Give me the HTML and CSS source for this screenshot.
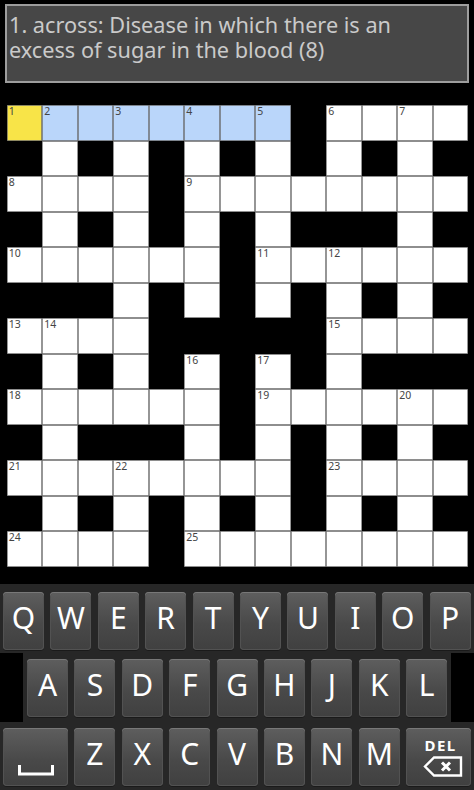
FILE: index.html
```html
<!DOCTYPE html>
<html>
<head>
<meta charset="utf-8">
<link rel="stylesheet" href="styles.css">
</head>
<body>
<div class="clue">1. across: Disease in which there is an<br>excess of sugar in the blood (8)</div>
<div class="grid">
  <div class="c sel"><span class="n">1</span></div><div class="c hl"><span class="n">2</span></div><div class="c hl"></div><div class="c hl"><span class="n">3</span></div><div class="c hl"></div><div class="c hl"><span class="n">4</span></div><div class="c hl"></div><div class="c hl"><span class="n">5</span></div><div class="b"></div><div class="c"><span class="n">6</span></div><div class="c"></div><div class="c"><span class="n">7</span></div><div class="c"></div>

  <div class="b"></div><div class="c"></div><div class="b"></div><div class="c"></div><div class="b"></div><div class="c"></div><div class="b"></div><div class="c"></div><div class="b"></div><div class="c"></div><div class="b"></div><div class="c"></div><div class="b"></div>

  <div class="c"><span class="n">8</span></div><div class="c"></div><div class="c"></div><div class="c"></div><div class="b"></div><div class="c"><span class="n">9</span></div><div class="c"></div><div class="c"></div><div class="c"></div><div class="c"></div><div class="c"></div><div class="c"></div><div class="c"></div>

  <div class="b"></div><div class="c"></div><div class="b"></div><div class="c"></div><div class="b"></div><div class="c"></div><div class="b"></div><div class="c"></div><div class="b"></div><div class="b"></div><div class="b"></div><div class="c"></div><div class="b"></div>

  <div class="c"><span class="n">10</span></div><div class="c"></div><div class="c"></div><div class="c"></div><div class="c"></div><div class="c"></div><div class="b"></div><div class="c"><span class="n">11</span></div><div class="c"></div><div class="c"><span class="n">12</span></div><div class="c"></div><div class="c"></div><div class="c"></div>

  <div class="b"></div><div class="b"></div><div class="b"></div><div class="c"></div><div class="b"></div><div class="c"></div><div class="b"></div><div class="c"></div><div class="b"></div><div class="c"></div><div class="b"></div><div class="c"></div><div class="b"></div>

  <div class="c"><span class="n">13</span></div><div class="c"><span class="n">14</span></div><div class="c"></div><div class="c"></div><div class="b"></div><div class="b"></div><div class="b"></div><div class="b"></div><div class="b"></div><div class="c"><span class="n">15</span></div><div class="c"></div><div class="c"></div><div class="c"></div>

  <div class="b"></div><div class="c"></div><div class="b"></div><div class="c"></div><div class="b"></div><div class="c"><span class="n">16</span></div><div class="b"></div><div class="c"><span class="n">17</span></div><div class="b"></div><div class="c"></div><div class="b"></div><div class="b"></div><div class="b"></div>

  <div class="c"><span class="n">18</span></div><div class="c"></div><div class="c"></div><div class="c"></div><div class="c"></div><div class="c"></div><div class="b"></div><div class="c"><span class="n">19</span></div><div class="c"></div><div class="c"></div><div class="c"></div><div class="c"><span class="n">20</span></div><div class="c"></div>

  <div class="b"></div><div class="c"></div><div class="b"></div><div class="b"></div><div class="b"></div><div class="c"></div><div class="b"></div><div class="c"></div><div class="b"></div><div class="c"></div><div class="b"></div><div class="c"></div><div class="b"></div>

  <div class="c"><span class="n">21</span></div><div class="c"></div><div class="c"></div><div class="c"><span class="n">22</span></div><div class="c"></div><div class="c"></div><div class="c"></div><div class="c"></div><div class="b"></div><div class="c"><span class="n">23</span></div><div class="c"></div><div class="c"></div><div class="c"></div>

  <div class="b"></div><div class="c"></div><div class="b"></div><div class="c"></div><div class="b"></div><div class="c"></div><div class="b"></div><div class="c"></div><div class="b"></div><div class="c"></div><div class="b"></div><div class="c"></div><div class="b"></div>

  <div class="c"><span class="n">24</span></div><div class="c"></div><div class="c"></div><div class="c"></div><div class="b"></div><div class="c"><span class="n">25</span></div><div class="c"></div><div class="c"></div><div class="c"></div><div class="c"></div><div class="c"></div><div class="c"></div><div class="c"></div>
</div>

<div class="keyboard">
  <div class="row row1">
    <div class="key">Q</div><div class="key">W</div><div class="key">E</div><div class="key">R</div><div class="key">T</div><div class="key">Y</div><div class="key">U</div><div class="key">I</div><div class="key">O</div><div class="key">P</div>
  </div>
  <div class="row row2">
    <div class="side"></div>
    <div class="mid">
      <div class="key">A</div><div class="key">S</div><div class="key">D</div><div class="key">F</div><div class="key">G</div><div class="key">H</div><div class="key">J</div><div class="key">K</div><div class="key">L</div>
    </div>
    <div class="side"></div>
  </div>
  <div class="row row3">
    <div class="key wide space">
      <svg width="36" height="12" viewBox="0 0 36 12"><path d="M1.5 1 V10 H34.5 V1" fill="none" stroke="#fff" stroke-width="3"/></svg>
    </div>
    <div class="key">Z</div><div class="key">X</div><div class="key">C</div><div class="key">V</div><div class="key">B</div><div class="key">N</div><div class="key">M</div>
    <div class="key wide del">
      <span class="del-label">DEL</span>
      <svg width="40" height="21" viewBox="0 0 40 21"><path d="M11 1.5 H38 V19.5 H11 L2 10.5 Z" fill="none" stroke="#fff" stroke-width="2.4" stroke-linejoin="miter"/><path d="M19 6.5 L27 14.5 M27 6.5 L19 14.5" stroke="#fff" stroke-width="3"/></svg>
    </div>
  </div>
</div>
</body>
</html>
```

FILE: styles.css
```css
html, body {
  margin: 0;
  padding: 0;
  background: #000;
}
body {
  width: 474px;
  height: 790px;
  overflow: hidden;
  font-family: "Noto Sans", "Open Sans", sans-serif;
}
.clue {
  box-sizing: border-box;
  margin: 4px 0 0 5px;
  width: 464px;
  height: 79px;
  border: 2px solid #9d9d9d;
  background: #474747;
  color: #cacaca;
  font-size: 21.7px;
  line-height: 25px;
  padding: 6px 3px 0 2px;
  white-space: nowrap;
}
.grid {
  display: grid;
  grid-template-columns: repeat(13, 35.5px);
  grid-template-rows: repeat(13, 35.5px);
  margin: 22px 0 0 6.7px;
  width: 461.5px;
}
.grid > div {
  position: relative;
}
.b {
  background: #000;
}
.c {
  background: #fff;
  box-shadow: inset 0 0 0 0.7px #6a6a6a;
}
.c.sel {
  background: #f8e448;
}
.c.hl {
  background: #bad6fa;
}
.n {
  position: absolute;
  left: 2px;
  top: 1px;
  font-size: 10.5px;
  line-height: 11px;
  color: #444;
}
.keyboard {
  margin-top: 17.5px;
  height: 206px;
  background: #272727;
  box-sizing: border-box;
  padding-top: 8px;
}
.row {
  display: flex;
}
.row1 {
  padding-left: 3px;
  gap: 6.4px;
  height: 58px;
}
.row2 {
  margin-top: 3px;
  height: 69px;
}
.side {
  width: 23px;
  background: #000;
}
.mid {
  flex: 1;
  display: flex;
  gap: 6.4px;
  padding: 6px 0 0 4px;
  box-sizing: border-box;
}
.row3 {
  padding: 6px 0 0 3px;
  gap: 6.4px;
  height: 58px;
}
.key {
  box-sizing: border-box;
  width: 41px;
  height: 58px;
  border-radius: 4px;
  background: linear-gradient(#5e5e5e, #494949 55%, #404040);
  box-shadow: inset 0 1px 0 #787878, inset 0 0 0 1px #525252, 0 1px 0 #1a1a1a;
  color: #fff;
  font-size: 30px;
  line-height: 30px;
  display: flex;
  align-items: center;
  justify-content: center;
  padding-bottom: 7px;
  flex: none;
}
.key.wide {
  width: 65px;
}
.space {
  align-items: flex-end;
  padding-bottom: 10px;
}
.del {
  flex-direction: column;
  justify-content: flex-start;
  padding: 10px 0 0 8px;
}
.del-label {
  font-size: 15px;
  line-height: 15px;
  font-weight: bold;
  letter-spacing: 1.5px;
  margin-bottom: 3px;
  margin-left: -4px;
}
```
